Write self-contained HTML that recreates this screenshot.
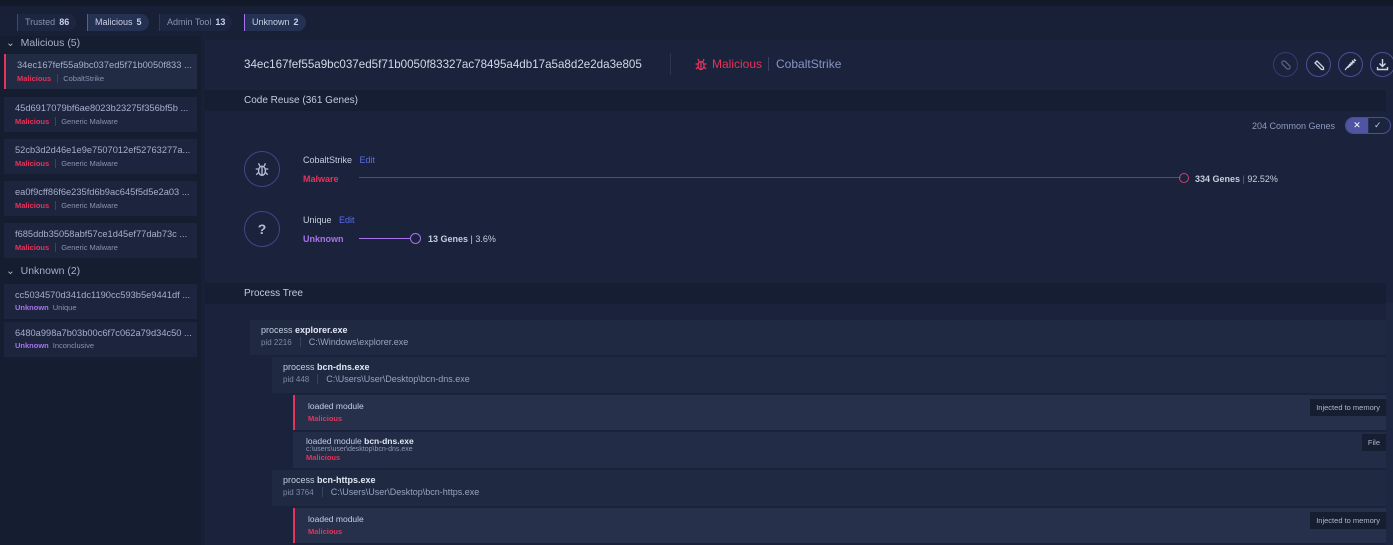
<!DOCTYPE html>
<html><head><meta charset="utf-8"><style>
*{box-sizing:border-box;margin:0;padding:0}
body{width:1393px;height:545px;overflow:hidden;background:#172036;font-family:"Liberation Sans",sans-serif;color:#c3cbe0;position:relative;font-size:11px}
.abs{position:absolute}
.top{left:0;top:0;width:1393px;height:6px;background:#121a2a}
.tab{position:absolute;top:14px;height:17px;border-radius:0 9px 9px 0;font-size:9px;line-height:17px;padding:0 7px;color:#8a93ad;background:#1c2640}
.tab b{color:#c9d0e4;margin-left:4px}
.side{left:0;top:36px;width:201px;height:509px;background:#151d31}
.grp{position:absolute;left:6px;font-size:10.5px;color:#a5afc8}
.card{position:absolute;left:4px;width:193px;height:35px;background:#1c253d;padding:6px 0 0 11px}
.card .h{font-size:9.3px;color:#a6afc8;white-space:nowrap}
.card .s{font-size:7.5px;margin-top:4px;color:#8a93ad}
.card .s b{margin-right:5px;padding-right:6px;border-right:1px solid #3a4460}
.red{color:#e8325a}.pur{color:#a872ec}
.main{left:205px;top:40px;width:1188px;height:505px;background:#1a233b}
.hdr{position:absolute;left:205px;width:1181px;height:21px;background:#161e33;font-size:10px;line-height:21px;padding-left:39px;color:#c3cbe0}
.circ{position:absolute;width:25px;height:25px;border:1px solid #4a4f9a;border-radius:50%;display:flex;align-items:center;justify-content:center}
.big{position:absolute;width:36px;height:36px;border:1px solid #41468a;border-radius:50%;color:#b5bdd4;text-align:center;font-weight:bold;font-size:14px;line-height:34px;display:flex;align-items:center;justify-content:center}
.node{position:absolute;background:#1f2942;padding:5px 0 0 11px;right:7px}
.node .a{font-size:9px;color:#c6cde0}
.node .a b{color:#e2e7f3}
.node .p{font-size:8px;color:#7f89a4;margin-top:2px}
.node .p span{margin-left:8px;padding-left:8px;border-left:1px solid #39425c;font-size:9px;color:#99a3bd}
.mod{position:absolute;left:293px;right:7px;background:#222c46;padding:6px 0 0 13px}
.mod.r{border-left:2px solid #e8325a;background:#26304b}
.mod .a{font-size:8.5px;color:#c6cde0}.mod .a b{color:#e2e7f3}
.mod .m{font-size:7.5px;font-weight:bold;color:#e8325a;margin-top:3px}
.tag{position:absolute;right:0;top:4px;background:#161e31;font-size:7.5px;color:#b0b8cf;padding:4px 6px}
</style></head><body>
<div class="abs top"></div>
<div class="tab" style="left:17px;border-left:1px solid #3f4a63">Trusted<b>86</b></div>
<div class="tab" style="left:87px;border-left:1px solid #b33a5a;background:#253153;color:#c9d0e4">Malicious<b>5</b></div>
<div class="tab" style="left:159px;border-left:1px solid #4a3040">Admin Tool<b>13</b></div>
<div class="tab" style="left:244px;border-left:1px solid #a872ec;background:#253153;color:#c9d0e4">Unknown<b>2</b></div>

<div class="abs side"></div>
<div class="grp" style="top:37px">&#8964;&nbsp; Malicious (5)</div>
<div class="card" style="top:54px;border-left:2px solid #e8325a;background:#222b44"><div class="h">34ec167fef55a9bc037ed5f71b0050f833 ...</div><div class="s"><b class="red">Malicious</b>CobaltStrike</div></div>
<div class="card" style="top:97px"><div class="h">45d6917079bf6ae8023b23275f356bf5b ...</div><div class="s"><b class="red">Malicious</b>Generic Malware</div></div>
<div class="card" style="top:139px"><div class="h">52cb3d2d46e1e9e7507012ef52763277a...</div><div class="s"><b class="red">Malicious</b>Generic Malware</div></div>
<div class="card" style="top:181px"><div class="h">ea0f9cff86f6e235fd6b9ac645f5d5e2a03 ...</div><div class="s"><b class="red">Malicious</b>Generic Malware</div></div>
<div class="card" style="top:223px"><div class="h">f685ddb35058abf57ce1d45ef77dab73c ...</div><div class="s"><b class="red">Malicious</b>Generic Malware</div></div>
<div class="grp" style="top:265px">&#8964;&nbsp; Unknown (2)</div>
<div class="card" style="top:284px"><div class="h">cc5034570d341dc1190cc593b5e9441df ...</div><div class="s" style="margin-top:3px"><b class="pur" style="border:0;padding:0;margin-right:4px">Unknown</b>Unique</div></div>
<div class="card" style="top:322px"><div class="h">6480a998a7b03b00c6f7c062a79d34c50 ...</div><div class="s" style="margin-top:3px"><b class="pur" style="border:0;padding:0;margin-right:4px">Unknown</b>Inconclusive</div></div>

<div class="abs main"></div>
<div class="abs" style="left:1386px;top:303px;width:7px;height:242px;background:#1d2742"></div>
<div class="abs" style="left:244px;top:58px;font-size:11.6px;color:#d2d8e8">34ec167fef55a9bc037ed5f71b0050f83327ac78495a4db17a5a8d2e2da3e805</div>
<div class="abs" style="left:670px;top:53px;width:1px;height:22px;background:#2c3550"></div>
<div class="abs" style="left:694px;top:57px;width:14px;height:14px"><svg width="14" height="14" viewBox="0 0 14 14" fill="none" stroke="#e8325a" stroke-width="1.3"><ellipse cx="7" cy="8.5" rx="3" ry="4"/><path d="M5 4.5 L4 2 M9 4.5 L10 2 M4 7 H1.5 M10 7 H12.5 M4 10 L2 12 M10 10 L12 12 M7 5 V12.5"/></svg></div>
<div class="abs" style="left:712px;top:57px;font-size:12px;color:#e8325a">Malicious</div>
<div class="abs" style="left:768px;top:57px;height:14px;width:1px;background:#3a4460"></div>
<div class="abs" style="left:776px;top:57px;font-size:12px;color:#8795c5">CobaltStrike</div>
<div class="circ" style="left:1273px;top:52px;border-color:#343a72"><svg width="12" height="12" viewBox="0 0 12 12" fill="none" stroke="#5c6489" stroke-width="1.2"><rect x="4" y="1" width="4" height="10" rx="2" transform="rotate(-45 6 6)"/></svg></div>
<div class="circ" style="left:1306px;top:52px"><svg width="12" height="12" viewBox="0 0 12 12" fill="none" stroke="#d0d6ea" stroke-width="1.3"><path d="M2 4 L4 2 L10.5 8.5 L10.5 10.5 L8.5 10.5 Z"/></svg></div>
<div class="circ" style="left:1338px;top:52px"><svg width="13" height="13" viewBox="0 0 13 13" fill="none" stroke="#d0d6ea" stroke-width="1.2"><path d="M10 1 L12 3 M11 2 L9 4 M8 2.5 L10.5 5 M9.5 4 L4 9.5 L3.5 9 L3 9.5 L1 12 M9 3.5 L3.5 9 M5 6 L7 8 M6.5 4.5 L8.5 6.5"/></svg></div>
<div class="circ" style="left:1370px;top:52px"><svg width="13" height="13" viewBox="0 0 13 13" fill="none" stroke="#d0d6ea" stroke-width="1.4"><path d="M6.5 1 V8 M3.5 5.5 L6.5 8.5 L9.5 5.5 M1.5 9 V11.5 H11.5 V9"/></svg></div>

<div class="hdr" style="top:90px">Code Reuse (361 Genes)</div>
<div class="abs" style="left:1252px;top:121px;font-size:9px;color:#8f9bc0">204 Common Genes</div>
<div class="abs" style="left:1345px;top:117px;width:46px;height:17px;border:1px solid #4a5090;border-radius:9px;overflow:hidden;background:#1c2540">
<div style="width:22px;height:100%;background:#4f55a3;color:#fff;font-size:9px;text-align:center;line-height:15px">&#10005;</div>
<div style="position:absolute;left:22px;top:0;width:1px;height:100%;background:#2a3050"></div>
<div style="position:absolute;left:28px;top:0;font-size:9px;line-height:15px;color:#c0c7df">&#10003;</div></div>

<div class="big" style="left:244px;top:151px"><svg width="16" height="16" viewBox="0 0 14 14" fill="none" stroke="#b5bdd4" stroke-width="1.2"><ellipse cx="7" cy="8.5" rx="3" ry="4"/><path d="M5 4.5 L4 2 M9 4.5 L10 2 M4 7 H1.5 M10 7 H12.5 M4 10 L2 12 M10 10 L12 12 M7 5 V12.5"/></svg></div>
<div class="abs" style="left:303px;top:155px;font-size:9px;color:#c6cde0">CobaltStrike <span style="color:#5a6cf0;margin-left:5px">Edit</span></div>
<div class="abs red" style="left:303px;top:174px;font-size:9px;font-weight:bold">Malware</div>
<div class="abs" style="left:359px;top:177px;width:822px;height:1px;background:#9a2e50"></div>
<div class="abs" style="left:1179px;top:173px;width:10px;height:10px;border:1px solid #d0406a;border-radius:50%"></div>
<div class="abs" style="left:1195px;top:174px;font-size:9px;color:#c6cde0"><b>334 Genes</b> <span style="color:#7c6d3a">|</span> 92.52%</div>

<div class="big" style="left:244px;top:211px">?</div>
<div class="abs" style="left:303px;top:215px;font-size:9px;color:#c6cde0">Unique <span style="color:#5a6cf0;margin-left:5px">Edit</span></div>
<div class="abs pur" style="left:303px;top:234px;font-size:9px;font-weight:bold">Unknown</div>
<div class="abs" style="left:359px;top:238px;width:52px;height:1px;background:#a872ec"></div>
<div class="abs" style="left:410px;top:233px;width:11px;height:11px;border:1px solid #a872ec;border-radius:50%"></div>
<div class="abs" style="left:428px;top:234px;font-size:9px;color:#c6cde0"><b>13 Genes</b> | 3.6%</div>

<div class="hdr" style="top:283px">Process Tree</div>

<div class="node" style="left:250px;top:320px;height:35px"><div class="a">process <b>explorer.exe</b></div><div class="p">pid 2216<span>C:\Windows\explorer.exe</span></div></div>
<div class="node" style="left:272px;top:357px;height:36px"><div class="a">process <b>bcn-dns.exe</b></div><div class="p">pid 448<span>C:\Users\User\Desktop\bcn-dns.exe</span></div></div>
<div class="mod r" style="top:395px;height:35px"><div class="a">loaded module</div><div class="m">Malicious</div><div class="tag">Injected to memory</div></div>
<div class="mod" style="top:432px;height:36px;padding-top:4px"><div class="a">loaded module <b>bcn-dns.exe</b></div><div style="font-size:7px;color:#8f99b3">c:\users\user\desktop\bcn-dns.exe</div><div class="m" style="margin-top:0">Malicious</div><div class="tag" style="top:2px">File</div></div>
<div class="node" style="left:272px;top:470px;height:36px"><div class="a">process <b>bcn-https.exe</b></div><div class="p">pid 3764<span>C:\Users\User\Desktop\bcn-https.exe</span></div></div>
<div class="mod r" style="top:508px;height:35px"><div class="a">loaded module</div><div class="m">Malicious</div><div class="tag">Injected to memory</div></div>
</body></html>
